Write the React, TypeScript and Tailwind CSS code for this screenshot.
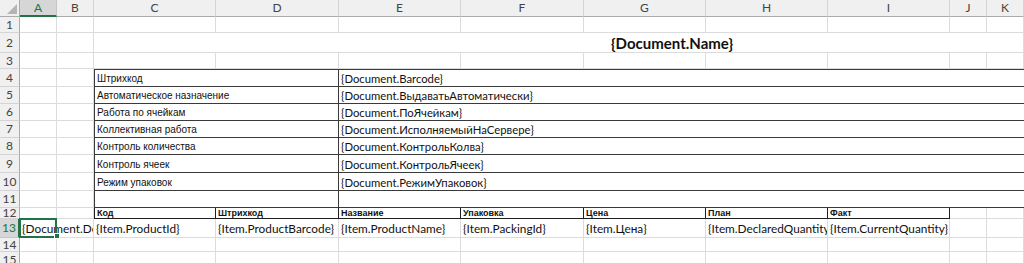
import React from 'react';

const COLS = ['A', 'B', 'C', 'D', 'E', 'F', 'G', 'H', 'I', 'J', 'K'];

const info = [
  ['Штрихкод', '{Document.Barcode}'],
  ['Автоматическое назначение', '{Document.ВыдаватьАвтоматически}'],
  ['Работа по ячейкам', '{Document.ПоЯчейкам}'],
  ['Коллективная работа', '{Document.ИсполняемыйНаСервере}'],
  ['Контроль количества', '{Document.КонтрольКолва}'],
  ['Контроль ячеек', '{Document.КонтрольЯчеек}'],
  ['Режим упаковок', '{Document.РежимУпаковок}'],
  ['', ''],
];

const heads = ['Код', 'Штрихкод', 'Название', 'Упаковка', 'Цена', 'План', 'Факт'];

const items = [
  '{Item.ProductId}',
  '{Item.ProductBarcode}',
  '{Item.ProductName}',
  '{Item.PackingId}',
  '{Item.Цена}',
  '{Item.DeclaredQuantity}',
  '{Item.CurrentQuantity}',
];

// plain cell with excel gridlines
const gl = 'border-r border-b border-r-[#dadcdd] border-b-[#dadcdd]';

const RowHead = ({ n, active = false }: { n: number; active?: boolean }) => (
  <div
    className={
      active
        ? 'flex items-center justify-center border-b border-b-[#c6c6c6] border-r-2 border-r-[#217346] bg-[#d6d6d6] text-[12px] text-[#217346]'
        : 'flex items-center justify-center border-b border-b-[#d4d4d4] border-r border-r-[#ababab] bg-[#f0f0f0] text-[12px] text-[#444]'
    }
  >
    {n}
  </div>
);

const Empty = ({ n }: { n: number }) => (
  <>
    {Array.from({ length: n }).map((_, i) => (
      <div key={i} className={gl} />
    ))}
  </>
);

export default function App() {
  return (
    <div className="h-[263px] w-[1024px] overflow-hidden bg-white font-['Lato',sans-serif] text-[#111]">
      <div className="grid grid-cols-[20px_37px_37px_122px_123px_122px_123px_122px_122px_122px_37px_37px] grid-rows-[17px_16px_20px_16px_18px_17px_17px_17px_17px_18px_18px_17px_11px_19px_14px_16px]">
        {/* column headers */}
        <div className="relative border-b border-r border-b-[#ababab] border-r-[#ababab] bg-[#f0f0f0]">
          <svg className="absolute bottom-[2px] right-[2px]" width="10" height="10" viewBox="0 0 10 10">
            <path d="M10 0 L10 10 L0 10 Z" fill="#b4b4b4" />
          </svg>
        </div>
        {COLS.map((c) =>
          c === 'A' ? (
            <div
              key={c}
              className="flex items-center justify-center border-r border-r-[#c6c6c6] border-b-2 border-b-[#217346] bg-[#d6d6d6] text-[12px] text-[#217346]"
            >
              {c}
            </div>
          ) : (
            <div
              key={c}
              className="flex items-center justify-center border-r border-b border-r-[#d4d4d4] border-b-[#ababab] bg-[#f0f0f0] text-[12px] text-[#444]"
            >
              {c}
            </div>
          )
        )}

        {/* row 1 */}
        <RowHead n={1} />
        <Empty n={11} />

        {/* row 2 - title */}
        <RowHead n={2} />
        <Empty n={2} />
        <div className={`col-span-9 flex items-end pb-px pl-[517px] ${gl}`}>
          <span className="whitespace-nowrap text-[15px] font-bold leading-none">{'{Document.Name}'}</span>
        </div>

        {/* row 3 */}
        <RowHead n={3} />
        <Empty n={11} />

        {/* rows 4-11 document fields */}
        {info.map(([label, value], i) => (
          <React.Fragment key={i}>
            <RowHead n={i + 4} />
            <Empty n={2} />
            <div
              className={`col-span-2 flex items-end overflow-hidden whitespace-nowrap border-x border-b border-[#3a3a3a] pb-[2px] pl-[2px] font-['Liberation_Sans',sans-serif] text-[10px] leading-none ${
                i === 0 ? 'border-t' : ''
              }`}
            >
              {label}
            </div>
            <div
              className={`col-span-7 flex items-end overflow-hidden whitespace-nowrap border-b border-[#3a3a3a] pb-[2px] pl-[2px] text-[11.3px] leading-none ${
                i === 0 ? 'border-t' : ''
              }`}
            >
              {value}
            </div>
          </React.Fragment>
        ))}

        {/* row 12 table header */}
        <RowHead n={12} />
        <Empty n={2} />
        {heads.map((h, i) => (
          <div
            key={h}
            className={`flex items-end overflow-hidden whitespace-nowrap border-r border-b border-[#1f1f1f] pl-[2px] font-['Liberation_Sans',sans-serif] text-[9px] font-bold leading-none ${
              i === 0 ? 'border-l' : ''
            }`}
          >
            {h}
          </div>
        ))}
        <Empty n={2} />

        {/* row 13 item template */}
        <RowHead n={13} active />
        <div className={`relative col-span-2 flex items-end pb-[2px] pl-[2px] ${gl}`}>
          <span className="overflow-hidden whitespace-nowrap text-[11.8px] leading-none">{'{Document.De'}</span>
          <div className="absolute -left-px -top-px h-[20px] w-[38px] border-2 border-[#217346]" />
          <div className="absolute left-[34px] top-[14px] h-[6px] w-[6px] border border-white bg-[#217346]" />
        </div>
        {items.map((t) => (
          <div key={t} className={`flex items-end overflow-hidden whitespace-nowrap pb-[2px] pl-[2px] text-[11.8px] leading-none ${gl}`}>
            {t}
          </div>
        ))}
        <Empty n={2} />

        {/* rows 14-15 */}
        <RowHead n={14} />
        <Empty n={11} />
        <RowHead n={15} />
        <Empty n={11} />
      </div>
    </div>
  );
}
